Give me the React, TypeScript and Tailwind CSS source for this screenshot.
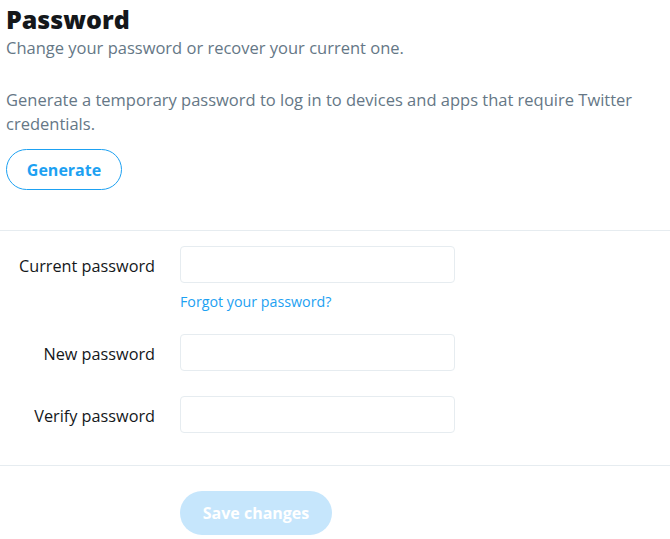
const rows = [
  { label: 'Current password', forgot: true, gap: 'mt-[22px]' },
  { label: 'New password', forgot: false, gap: 'mt-[25px]' },
  { label: 'Verify password', forgot: false, gap: '' },
];

export default function App() {
  return (
    <div className="w-[670px] h-[539px] bg-white overflow-hidden font-['Open_Sans',sans-serif] text-[#14171a]">
      {/* Header */}
      <div className="px-[6px] pt-[2px]">
        <h1 className="text-[25px] leading-[34px] font-extrabold">Password</h1>
        <p className="text-[16.5px] leading-[24px] text-[#657786]">
          Change your password or recover your current one.
        </p>
        <p className="mt-[28px] text-[16.5px] leading-[24px] text-[#657786]">
          Generate a temporary password to log in to devices and apps that require Twitter
          credentials.
        </p>
        <button className="mt-[13px] h-[41px] w-[116px] rounded-full border border-[#1da1f2] text-[#1da1f2] text-[16px] font-bold">
          Generate
        </button>
      </div>

      <div className="mt-[40px] border-t border-[#e6ecf0]" />

      {/* Form */}
      <div className="pt-[15px] pb-[32px] flex flex-col">
        {rows.map((row, i) => (
          <div key={row.label} className={`flex items-start ${i > 0 ? rows[i - 1].gap : ''}`}>
            <label className="w-[155px] shrink-0 pt-[3px] text-right text-[16.25px] leading-[34px]">
              {row.label}
            </label>
            <div className="ml-[25px] flex flex-col">
              <input
                type="password"
                className="w-[275px] h-[37px] rounded-[4px] border border-[#e6ecf0] outline-none"
              />
              {row.forgot && (
                <a className="mt-[9px] text-[14.25px] leading-[20px] text-[#1da1f2]">
                  Forgot your password?
                </a>
              )}
            </div>
          </div>
        ))}
      </div>

      <div className="border-t border-[#e6ecf0]" />

      <div className="pl-[180px] pt-[25px]">
        <button className="h-[44px] w-[152px] rounded-full bg-[#c6e6fc] text-white text-[16px] font-bold">
          Save changes
        </button>
      </div>
    </div>
  );
}
